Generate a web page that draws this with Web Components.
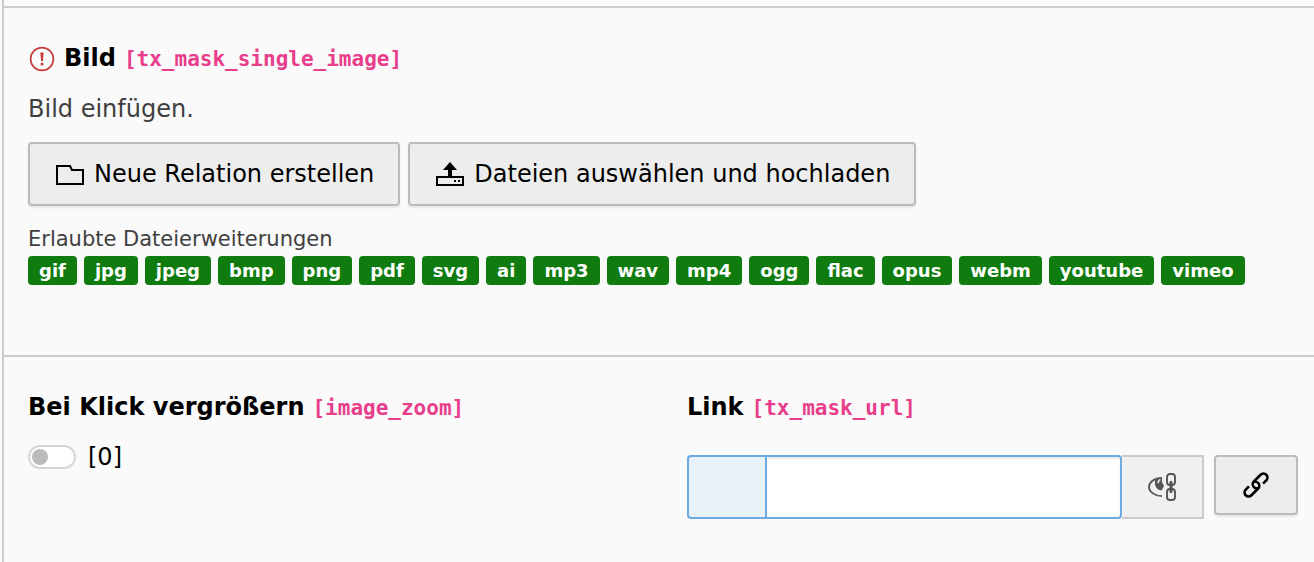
<!DOCTYPE html>
<html lang="de">
<head>
<meta charset="utf-8">
<title>Bild</title>
<style>
    :root {
        --line: #cccccc;
        --control-border: #bbbbbb;
        --control-bg: #ededed;
        --focus: #6daae0;
        --muted: #404040;
    }
    body {
        margin: 0;
        padding-left: 2px;
        background: #fafafa;
        color: #000;
        font: 24px/32px "DejaVu Sans", Verdana, sans-serif;
    }
</style>
</head>
<body>
<form-panel>
    <form-section>
        <file-field required>
            <span slot="label">Bild</span>
            <span slot="name">[tx_mask_single_image]</span>
            <span slot="description">Bild einfügen.</span>
            <action-button slot="actions" icon="folder">Neue Relation erstellen</action-button>
            <action-button slot="actions" icon="upload">Dateien auswählen und hochladen</action-button>
            <span slot="hint">Erlaubte Dateierweiterungen</span>
            <file-extensions slot="extensions" list="gif jpg jpeg bmp png pdf svg ai mp3 wav mp4 ogg flac opus webm youtube vimeo"></file-extensions>
        </file-field>
    </form-section>
    <form-section columns="2">
        <switch-field>
            <span slot="label">Bei Klick vergrößern</span>
            <span slot="name">[image_zoom]</span>
        </switch-field>
        <link-field>
            <span slot="label">Link</span>
            <span slot="name">[tx_mask_url]</span>
        </link-field>
    </form-section>
</form-panel>

<script>
const ICONS = {
    required: '<circle cx="14" cy="14" r="11.4" fill="none" stroke="#c83c3c" stroke-width="1.7"/><path fill="#c83c3c" d="M12.300 7.500h3.400l-.8 8.500h-1.800z"/><circle cx="14" cy="18.900" r="1.500" fill="#c83c3c"/>',
    folder: '<path d="M1 24V6h13l2 4h11v14z" fill="none" stroke="currentColor" stroke-width="2"/>',
    upload: '<path fill="currentColor" d="M14 2l7 8h-5v8h-4v-8H7z"/><path d="M12 17H1v8h26v-8H16" fill="none" stroke="currentColor" stroke-width="2"/><path fill="currentColor" d="M18 20h2v2h-2zM22 20h2v2h-2z"/>',
    // eye cut in half, with a vertical chain at its right
    preview: '<path d="M14 4.800C6 5 1 9.500 1 14s5 8.700 13 9.200" fill="none" stroke="currentColor" stroke-width="1.8"/><path fill="currentColor" d="M7 7.500L10 5.500h4V9l2 4-2.500 4.500C9.500 17 7 14 7 10z"/><path d="M10.500 10.300c-.6-1.200 0-2.800 1.800-4" fill="none" stroke="#f0f0f0" stroke-width="1.400"/><g fill="none" stroke="currentColor" stroke-width="1.900"><rect x="19" y="1" width="8" height="11" rx="3"/><rect x="19" y="16" width="8" height="11" rx="3"/></g><rect x="21.500" y="8" width="3" height="12" rx="1" fill="currentColor"/>',
    // two open chain links that hook into each other
    link: '<g fill="none" stroke="currentColor" stroke-width="2.600" transform="rotate(-45 14 14)"><path d="M20 18h4.500a4 4 0 0 0 0-8H15a4 4 0 0 0-4 4c0 1.500.8 2.700 2 3.400"/><path d="M8 10H3.500a4 4 0 0 0 0 8H13a4 4 0 0 0 4-4c0-1.500-.8-2.700-2-3.400"/></g>',
};

function icon(name) {
    return `<svg width="28" height="28" viewBox="0 0 28 28" aria-hidden="true">${ICONS[name] || ''}</svg>`;
}

// Shared by every field that shows a label followed by its column name
const LABEL_STYLE = `
    *, *::before { box-sizing: border-box; }
    :host { display: block; min-width: 0; }
    .heading {
        display: flex;
        align-items: baseline;
        gap: 8px;
        font-weight: bold;
    }
    .heading svg { flex: none; align-self: center; }
    code {
        color: #e83e8c;
        font: bold 21px/32px "DejaVu Sans Mono", Menlo, monospace;
    }
`;

class FormPanel extends HTMLElement {
    constructor() {
        super();
        this.attachShadow({ mode: 'open' }).innerHTML = `
            <style>
                :host {
                    display: block;
                    box-sizing: border-box;
                    min-height: 100vh;
                    padding-top: 6px;
                    border-left: 2px solid var(--line);
                }
            </style>
            <slot></slot>
        `;
    }
}

class FormSection extends HTMLElement {
    constructor() {
        super();
        this.attachShadow({ mode: 'open' }).innerHTML = `
            <style>
                :host {
                    display: grid;
                    gap: 48px;
                    padding: 34px 16px 40px 24px;
                    border-top: 2px solid var(--line);
                }
                :host([columns="2"]) { grid-template-columns: 1fr 1fr; }
            </style>
            <slot></slot>
        `;
    }
}

class ActionButton extends HTMLElement {
    constructor() {
        super();
        this.attachShadow({ mode: 'open' });
    }

    connectedCallback() {
        this.shadowRoot.innerHTML = `
            <style>
                :host { display: block; }
                button {
                    display: flex;
                    align-items: center;
                    justify-content: center;
                    gap: 10px;
                    box-sizing: border-box;
                    width: 100%;
                    height: 64px;
                    padding: 0 24px 0 26px;
                    border: 2px solid var(--control-border);
                    border-radius: 4px;
                    background: var(--control-bg);
                    box-shadow: 0 2px 2px rgba(0, 0, 0, .08);
                    color: inherit;
                    font: inherit;
                    cursor: pointer;
                }
                :host([square]) button { width: 84px; height: 60px; padding: 0; }
                svg { flex: none; }
            </style>
            <button type="button">${icon(this.getAttribute('icon'))}<slot></slot></button>
        `;
        const title = this.getAttribute('label');
        if (title) this.shadowRoot.querySelector('button').setAttribute('aria-label', title);
    }
}

class FileExtensions extends HTMLElement {
    constructor() {
        super();
        this.attachShadow({ mode: 'open' });
    }

    connectedCallback() {
        const items = (this.getAttribute('list') || '').split(' ').filter(Boolean);
        this.shadowRoot.innerHTML = `
            <style>
                :host { display: block; }
                ul {
                    display: flex;
                    flex-wrap: wrap;
                    gap: 8px 7px;
                    margin: 0;
                    padding: 0;
                    list-style: none;
                }
                li {
                    padding: 0 11px;
                    border-radius: 4px;
                    background: #107c10;
                    color: #fff;
                    font-size: 18px;
                    font-weight: bold;
                    line-height: 29px;
                }
            </style>
            <ul>${items.map((ext) => `<li>${ext}</li>`).join('')}</ul>
        `;
    }
}

class FileField extends HTMLElement {
    constructor() {
        super();
        this.attachShadow({ mode: 'open' });
    }

    connectedCallback() {
        this.shadowRoot.innerHTML = `
            <style>
                ${LABEL_STYLE}
                .description { margin-top: 18px; color: var(--muted); }
                .actions { display: flex; flex-wrap: wrap; gap: 8px; margin-top: 17px; }
                .hint { margin: 19px 0 3px; color: var(--muted); font-size: 21px; line-height: 28px; }
                .extensions { padding-bottom: 30px; }
            </style>
            <div role="group" aria-labelledby="heading">
                <div class="heading" id="heading">
                    ${this.hasAttribute('required') ? icon('required') : ''}
                    <slot name="label"></slot><code><slot name="name"></slot></code>
                </div>
                <div class="description"><slot name="description"></slot></div>
                <div class="actions"><slot name="actions"></slot></div>
                <div class="hint"><slot name="hint"></slot></div>
                <div class="extensions"><slot name="extensions"></slot></div>
            </div>
        `;
    }
}

class SwitchField extends HTMLElement {
    constructor() {
        super();
        this.attachShadow({ mode: 'open' }).innerHTML = `
            <style>
                ${LABEL_STYLE}
                .row { display: flex; align-items: center; gap: 12px; margin-top: 17px; }
                input {
                    appearance: none;
                    flex: none;
                    width: 48px;
                    height: 24px;
                    margin: 0;
                    padding: 2px;
                    border: 2px solid #d6d6d6;
                    border-radius: 12px;
                    background: #fff;
                    cursor: pointer;
                }
                input::before {
                    content: "";
                    display: block;
                    width: 16px;
                    height: 16px;
                    border-radius: 50%;
                    background: #bbb;
                }
                input:checked::before { margin-left: auto; background: #107c10; }
            </style>
            <label class="heading" for="toggle"><slot name="label"></slot><code><slot name="name"></slot></code></label>
            <div class="row">
                <input type="checkbox" id="toggle">
                <output for="toggle">[0]</output>
            </div>
        `;
        const input = this.shadowRoot.querySelector('input');
        input.addEventListener('change', () => {
            this.shadowRoot.querySelector('output').textContent = input.checked ? '[1]' : '[0]';
        });
    }
}

class LinkField extends HTMLElement {
    constructor() {
        super();
        this.attachShadow({ mode: 'open' }).innerHTML = `
            <style>
                ${LABEL_STYLE}
                .row { display: flex; align-items: flex-start; gap: 10px; margin-top: 31px; }
                .group { display: flex; flex: 1; min-width: 0; height: 64px; }
                .addon {
                    flex: none;
                    width: 78px;
                    border: 2px solid var(--focus);
                    border-right: 0;
                    border-radius: 4px 0 0 4px;
                    background: #e9f1fb;
                }
                input {
                    flex: 1;
                    min-width: 0;
                    padding: 0 16px;
                    border: 2px solid var(--focus);
                    border-radius: 0 4px 4px 0;
                    background: #fff;
                    box-shadow: inset 0 2px 2px rgba(0, 0, 0, .075);
                    font: inherit;
                    outline: 0;
                }
                .preview {
                    display: flex;
                    flex: none;
                    align-items: center;
                    justify-content: center;
                    width: 82px;
                    padding: 0;
                    border: 2px solid var(--line);
                    border-left: 0;
                    background: #f0f0f0;
                    color: #555;
                }
            </style>
            <label class="heading" for="url"><slot name="label"></slot><code><slot name="name"></slot></code></label>
            <div class="row">
                <div class="group">
                    <span class="addon"></span>
                    <input type="text" id="url">
                    <button type="button" class="preview" aria-label="Link-Erklärung umschalten">${icon('preview')}</button>
                </div>
                <action-button square icon="link" label="Link auswählen"></action-button>
            </div>
        `;
    }
}

customElements.define('form-panel', FormPanel);
customElements.define('form-section', FormSection);
customElements.define('action-button', ActionButton);
customElements.define('file-extensions', FileExtensions);
customElements.define('file-field', FileField);
customElements.define('switch-field', SwitchField);
customElements.define('link-field', LinkField);
</script>
</body>
</html>
